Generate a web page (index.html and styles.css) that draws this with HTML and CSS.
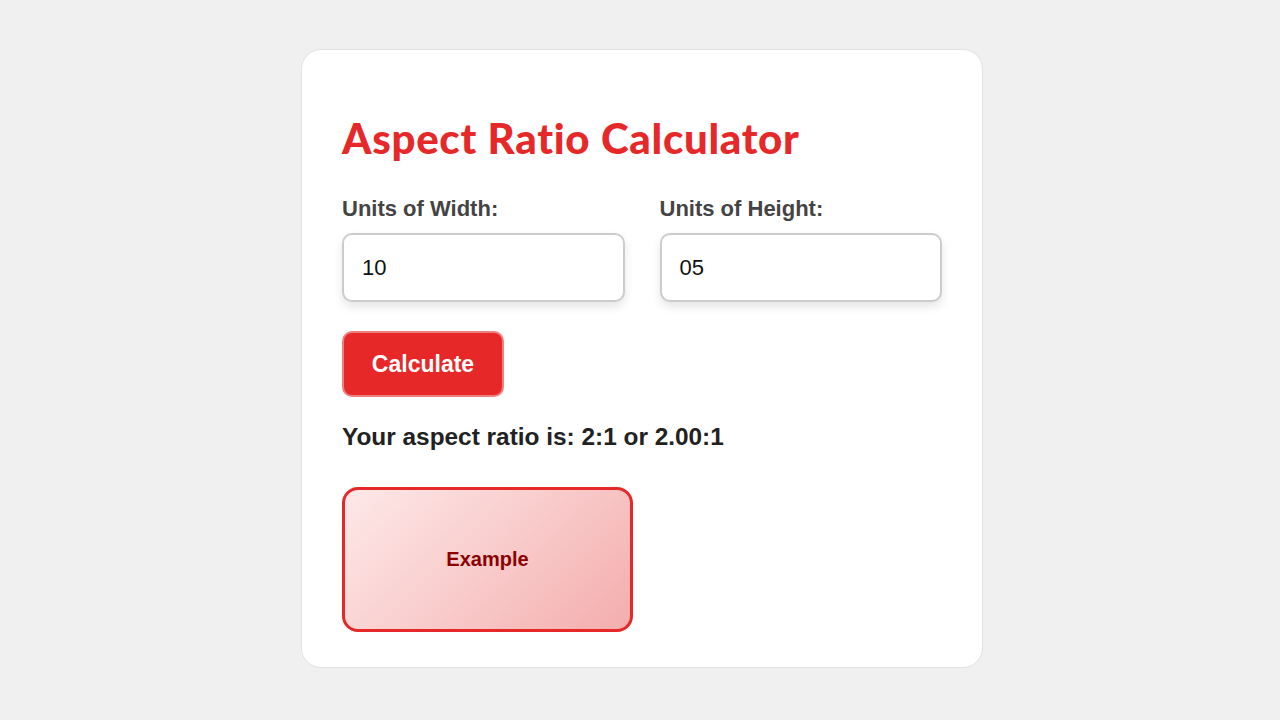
FILE: index.html
```html
<!DOCTYPE html>
<html>
<head>
<meta charset="utf-8">
<link rel="stylesheet" href="styles.css">
</head>
<body>
<div class="card">
  <h1 class="title">Aspect Ratio Calculator</h1>
  <div class="fields">
    <div class="field">
      <label class="label">Units of Width:</label>
      <input class="input" type="text" value="10">
    </div>
    <div class="field">
      <label class="label">Units of Height:</label>
      <input class="input" type="text" value="05">
    </div>
  </div>
  <button class="btn">Calculate</button>
  <p class="result">Your aspect ratio is: 2:1 or 2.00:1</p>
  <div class="example">Example</div>
</div>
</body>
</html>
```
FILE: styles.css
```css
html, body { margin: 0; padding: 0; }
body {
  background: #f0f0f0;
  font-family: "Liberation Sans", Arial, sans-serif;
  height: 720px;
}
.card {
  box-sizing: border-box;
  width: 682px;
  height: 619px;
  margin: 49px 0 0 301px;
  background: #fff;
  border: 1px solid #e2e2e2;
  border-radius: 20px;
  padding: 63px 40px 34px 40px;
}
.title {
  margin: 0;
  font-family: "Lato", sans-serif;
  font-weight: 900;
  font-size: 42px;
  line-height: 50px;
  letter-spacing: 0.7px;
  color: #e62828;
}
.fields {
  display: flex;
  gap: 35px;
  margin-top: 33px;
}
.field { flex: 1; display: flex; flex-direction: column; }
.label {
  font-weight: bold;
  font-size: 22px;
  line-height: 26px;
  color: #444;
  margin-bottom: 11px;
}
.input {
  box-sizing: border-box;
  height: 69px;
  width: 100%;
  border: 2px solid #ccc;
  border-radius: 10px;
  padding: 0 18px;
  font-family: "Liberation Sans", Arial, sans-serif;
  font-size: 22px;
  color: #111;
  box-shadow: 0 5px 10px rgba(0,0,0,0.1);
  outline: none;
}
.btn {
  display: block;
  margin-top: 29px;
  width: 162px;
  height: 66px;
  background: #e62828;
  border: 2px solid #f08080;
  border-radius: 10px;
  color: #fff;
  font-family: "Liberation Sans", Arial, sans-serif;
  font-weight: bold;
  font-size: 23px;
}
.result {
  margin: 26px 0 0;
  font-weight: bold;
  font-size: 24.4px;
  line-height: 28px;
  color: #222;
}
.example {
  box-sizing: border-box;
  margin-top: 36px;
  width: 291px;
  height: 145px;
  border: 3px solid #e62828;
  border-radius: 16px;
  background: linear-gradient(135deg, #fee8e8 0%, #f9cccc 50%, #f4adad 100%);
  display: flex;
  align-items: center;
  justify-content: center;
  font-weight: bold;
  font-size: 20px;
  color: #8b0000;
}
```
